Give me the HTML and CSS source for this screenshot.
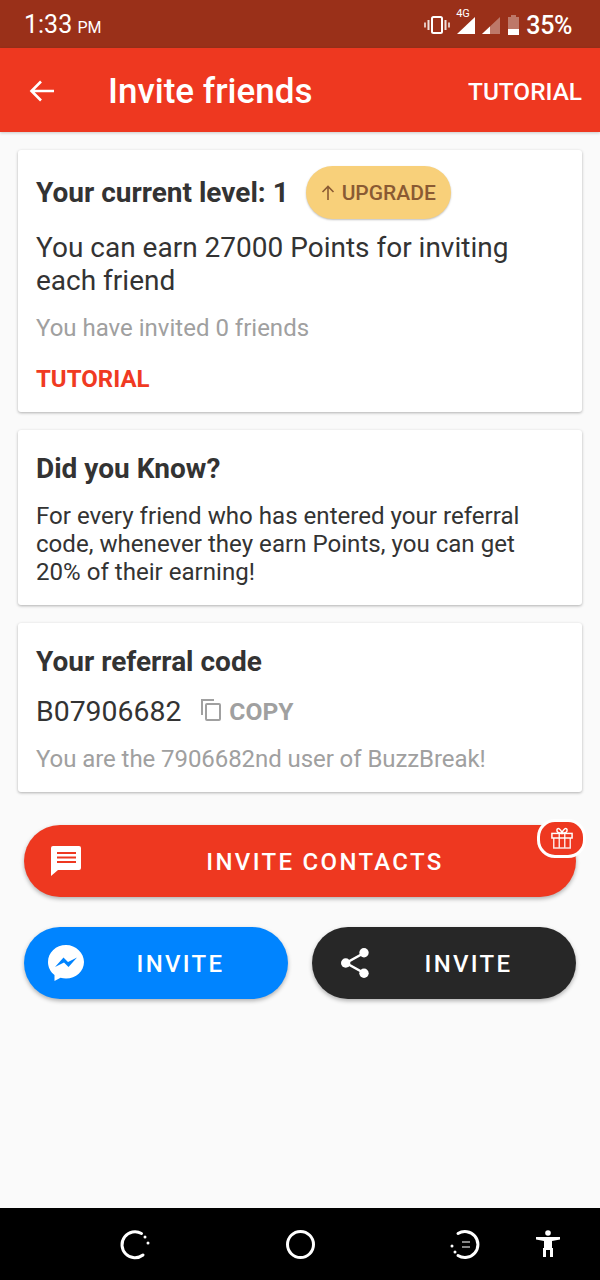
FILE: index.html
```html
<!DOCTYPE html>
<html lang="en">
<head>
  <meta charset="UTF-8">
  <title>Invite friends</title>
  <meta name="viewport" content="width=device-width, initial-scale=1">
  <link rel="stylesheet" href="styles.css">
</head>
<body>
  <div class="screen">

    <div class="status-bar">
      <div class="clock">1:33 <span class="ampm">PM</span></div>
      <div class="status-icons">
        <svg class="ic-vibrate" width="26" height="18" viewBox="0 0 26 18">
          <rect x="8" y="1" width="10" height="16" rx="1.500" fill="none" stroke="#fff" stroke-width="2"/>
          <path d="M4.500 4v10M21.500 4v10" stroke="#fff" stroke-width="2" opacity=".85"/>
          <path d="M1 6.500v5M25 6.500v5" stroke="#fff" stroke-width="2" opacity=".7"/>
        </svg>
        <div class="signal-wrap">
          <span class="net">4G</span>
          <svg class="ic-signal1" width="18" height="17" viewBox="0 0 18 17"><path d="M18 0v17H0z" fill="#fff"/></svg>
        </div>
        <svg class="ic-signal2" width="18" height="17" viewBox="0 0 18 17">
          <path d="M18 0v17H0z" fill="#fff" opacity=".35"/>
          <path d="M8 9.400V17H0z" fill="#fff"/>
        </svg>
        <svg class="ic-battery" width="11" height="20" viewBox="0 0 11 20">
          <path d="M3 0h5v2h3v18H0V2h3z" fill="#fff" opacity=".35"/>
          <rect y="14" width="11" height="6" fill="#fff"/>
        </svg>
        <span class="battery-pct">35%</span>
      </div>
    </div>

    <div class="app-bar">
      <svg class="back" width="26" height="24" viewBox="0 0 26 24">
        <path d="M25 12H3M12 2.500 2.500 12l9.500 9.500" fill="none" stroke="#fff" stroke-width="2.600"/>
      </svg>
      <h1>Invite friends</h1>
      <span class="bar-action">TUTORIAL</span>
    </div>

    <div class="content">
      <div class="card">
        <div class="level-row">
          <h2>Your current level: 1</h2>
          <div class="upgrade">
            <svg width="14" height="15" viewBox="0 0 14 15"><path d="M7 15V1.500M1.500 7 7 1.500 12.500 7" fill="none" stroke="#8a5a33" stroke-width="1.600"/></svg>
            UPGRADE
          </div>
        </div>
        <p class="earn">You can earn 27000 Points for inviting each friend</p>
        <p class="muted invited">You have invited 0 friends</p>
        <div class="tutorial-link">TUTORIAL</div>
      </div>

      <div class="card card-know">
        <h2>Did you Know?</h2>
        <p class="know">For every friend who has entered your referral code, whenever they earn Points, you can get 20% of their earning!</p>
      </div>

      <div class="card">
        <h2>Your referral code</h2>
        <div class="code-row">
          <span class="code">B07906682</span>
          <svg class="ic-copy" width="20" height="22" viewBox="0 0 20 22">
            <path d="M1 16V1h12" fill="none" stroke="#a0a0a0" stroke-width="2"/>
            <rect x="5" y="5" width="14" height="16" rx="1" fill="none" stroke="#a0a0a0" stroke-width="2"/>
          </svg>
          <span class="copy">COPY</span>
        </div>
        <p class="muted nth">You are the 7906682nd user of BuzzBreak!</p>
      </div>

      <div class="invite-btn btn-contacts">
        <svg class="btn-icon" width="30" height="30" viewBox="0 0 30 30">
          <path d="M2 0h26a2 2 0 0 1 2 2v20a2 2 0 0 1-2 2H7l-7 6V2a2 2 0 0 1 2-2z" fill="#fff"/>
          <path d="M6 7h19M6 11.500h19M6 16h19" stroke="#ee3820" stroke-width="2.200"/>
        </svg>
        <span>INVITE CONTACTS</span>
        <div class="gift-badge">
          <svg width="22" height="22" viewBox="0 0 24 24" fill="none" stroke="#fff" stroke-width="1.600">
            <rect x="1" y="7" width="22" height="5"/>
            <path d="M3 12v11h18V12M9 7v16M15 7v16" opacity=".85"/>
            <path d="M12 7C8 7 6 5.500 6.500 3S11 1.500 12 7c1-5.500 5-6.500 5.500-4S16 7 12 7z"/>
          </svg>
        </div>
      </div>

      <div class="btn-row">
        <div class="invite-btn btn-messenger">
          <svg class="btn-icon" width="36" height="36" viewBox="0 0 36 36">
            <path d="M18 0C8 0 0 7.500 0 17c0 5.300 2.500 10 6.500 13v6l6-3.300c1.700.5 3.500.8 5.500.8 10 0 18-7.500 18-16.500S28 0 18 0z" fill="#fff"/>
            <path d="m7 22 8.500-9.500 4.500 4.500 9-4.500L20.500 22 16 17.500z" fill="#0084ff"/>
          </svg>
          <span>INVITE</span>
        </div>
        <div class="invite-btn btn-share">
          <svg class="btn-icon" width="28" height="30" viewBox="0 0 28 30">
            <path d="M23 5 5 15l18 10" fill="none" stroke="#fff" stroke-width="2.500"/>
            <circle cx="23" cy="4.700" r="4.700" fill="#fff"/>
            <circle cx="4.700" cy="15" r="4.700" fill="#fff"/>
            <circle cx="23" cy="25.300" r="4.700" fill="#fff"/>
          </svg>
          <span>INVITE</span>
        </div>
      </div>
    </div>

    <div class="nav-bar">
      <svg class="nav-back" width="32" height="32" viewBox="0 0 32 32" fill="none" stroke="#fff" stroke-width="3">
        <path d="M25 27A13 13 0 1 1 23.500 5.500" stroke-linecap="round"/>
        <circle cx="27" cy="9" r="1.500" fill="#fff" stroke="none"/>
        <circle cx="30" cy="15" r="1.500" fill="#fff" stroke="none"/>
      </svg>
      <svg class="nav-home" width="32" height="32" viewBox="0 0 32 32" fill="none" stroke="#fff" stroke-width="3">
        <circle cx="15.500" cy="16.500" r="13"/>
      </svg>
      <svg class="nav-recent" width="32" height="32" viewBox="0 0 32 32" fill="none" stroke="#fff" stroke-width="3">
        <path d="M8 5.500A13 13 0 1 1 8 27.500" stroke-linecap="round"/>
        <circle cx="2" cy="18" r="1.500" fill="#fff" stroke="none"/>
        <circle cx="5" cy="24" r="1.500" fill="#fff" stroke="none"/>
        <path d="M12 14h8M12 19h8" stroke-width="1.500" opacity=".7"/>
      </svg>
      <svg class="nav-a11y" width="26" height="28" viewBox="0 0 26 28" fill="#fff">
        <circle cx="13" cy="3" r="2.800"/>
        <path d="M1 7 25 7 25 9.500 17 11V18H18V27H15V20H11V27H8V18H9V11L1 9.500z"/>
      </svg>
    </div>
  </div>
</body>
</html>
```

FILE: styles.css
```css
* { box-sizing: border-box; }
html, body { margin: 0; padding: 0; }
body { font-family: Roboto, sans-serif; background: #fafafa; color: #333; }
h1, h2, p { margin: 0; }

.screen { width: 600px; height: 1280px; display: flex; flex-direction: column; overflow: hidden; background: #fafafa; }

/* status bar */
.status-bar { height: 48px; background: #9a3019; color: #fff; display: flex; align-items: center; justify-content: space-between; padding: 1px 28px 0 24px; flex: none; }
.clock { font-size: 25px; }
.ampm { font-size: 16px; margin-left: -1px; }
.status-icons { display: flex; align-items: center; }
.ic-vibrate { margin-right: 7px; }
.signal-wrap { position: relative; width: 18px; height: 17px; margin-top: 1px; }
.ic-signal1 { display: block; }
.net { position: absolute; left: -1px; top: -10px; font-size: 11px; letter-spacing: -0.4px; }
.ic-signal2 { margin: 1px 0 0 7px; }
.ic-battery { margin: 0 0 0 8px; }
.battery-pct { font-size: 25px; font-weight: 500; margin-left: 7px; letter-spacing: -0.4px; padding-top: 1px; }

/* app bar */
.app-bar { height: 84px; background: #ee3820; color: #fff; display: flex; align-items: center; padding: 2px 18px 0 29px; flex: none; box-shadow: 0 1px 3px rgba(0,0,0,0.2); }
.app-bar h1 { font-size: 35px; font-weight: 500; margin-left: 53px; flex: 1; }
.bar-action { font-size: 24.4px; font-weight: 500; }

/* cards */
.content { flex: 1; padding: 18px 18px 0; }
.card { background: #fff; border-radius: 3px; padding: 18px; margin-bottom: 18px; box-shadow: 0 1px 3px rgba(0,0,0,0.3); }
.card > h2 { margin-top: 5px; }
.card h2 { font-size: 28px; font-weight: 700; line-height: 32px; color: #333; }
.card-know { padding-bottom: 19px; }

.level-row { display: flex; align-items: center; height: 54px; margin-top: -3px; }
.level-row h2 { padding-top: 1px; }
.upgrade { margin-left: 17px; width: 145px; height: 53px; border-radius: 27px; background: #f8d07a; color: #8a5a33; font-size: 21px; font-weight: 500; display: flex; align-items: center; justify-content: center; gap: 7px; padding-top: 1px; box-shadow: 0 1px 2px rgba(0,0,0,0.25); }
.earn { font-size: 28px; line-height: 33px; margin-top: 12px; }
.muted { color: #a0a0a0; font-size: 24px; line-height: 30px; }
.invited { margin-top: 16px; }
.tutorial-link { color: #f03a22; font-size: 24px; font-weight: 700; line-height: 30px; margin-top: 21px; }

.know { font-size: 24.1px; line-height: 28px; margin-top: 17px; }

.code-row { display: flex; align-items: center; margin-top: 15px; height: 36px; }
.code { font-size: 28.4px; }
.ic-copy { margin-left: 20px; margin-top: -3px; }
.copy { font-size: 24.6px; font-weight: 700; color: #a0a0a0; margin-left: 8px; }
.nth { margin-top: 15px; letter-spacing: -0.07px; }

/* invite buttons */
.invite-btn { position: relative; height: 72px; border-radius: 36px; color: #fff; display: flex; align-items: center; justify-content: center; padding-top: 2px; font-size: 24px; font-weight: 500; letter-spacing: 2.33px; box-shadow: 0 2px 4px rgba(0,0,0,0.3); }
.btn-icon { position: absolute; top: 50%; transform: translateY(-50%); }
.btn-contacts { background: #ee3820; margin: 33px 6px 0; padding-left: 50px; }
.btn-contacts .btn-icon { left: 27px; }
.gift-badge { position: absolute; right: -10px; top: -6px; width: 49px; height: 39px; background: #ee3820; border: 3px solid #fff; border-radius: 18px; display: flex; align-items: center; justify-content: center; padding-bottom: 2px; }
.btn-row { display: flex; gap: 24px; margin: 30px 6px 0; }
.btn-row .invite-btn { flex: 1; padding-left: 49px; justify-content: center; }
.btn-messenger { background: #0084ff; }
.btn-messenger .btn-icon { left: 24px; }
.btn-share { background: #272727; }
.btn-share .btn-icon { left: 29px; }

/* nav bar */
.nav-bar { height: 72px; background: #000; position: relative; flex: none; }
.nav-bar svg { position: absolute; top: 20px; }
.nav-back { left: 118px; }
.nav-home { left: 285px; }
.nav-recent { left: 450px; }
.nav-bar .nav-a11y { left: 535px; top: 22px; }
```
